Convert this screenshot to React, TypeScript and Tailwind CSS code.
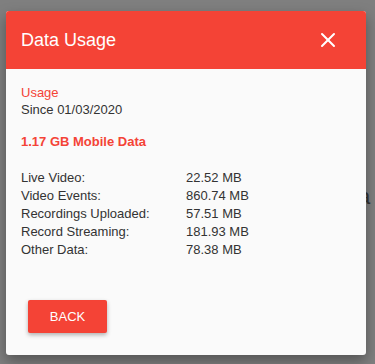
import { X } from "lucide-react";

const rows = [
  ["Live Video:", "22.52 MB"],
  ["Video Events:", "860.74 MB"],
  ["Recordings Uploaded:", "57.51 MB"],
  ["Record Streaming:", "181.93 MB"],
  ["Other Data:", "78.38 MB"],
];

export default function App() {
  return (
    <div
      className="relative h-[364px] w-[375px] overflow-hidden bg-[#7f7f7f]"
      style={{ fontFamily: '"Liberation Sans", Arial, sans-serif' }}
    >
      {/* page text showing behind the overlay */}
      <span className="absolute left-[358px] top-[186px] text-[22px] leading-none text-[#333]">a</span>

      <div className="relative ml-[6px] mt-[11px] w-[360px] overflow-hidden rounded-[3px] bg-[#fafafa] shadow-[0_6px_14px_rgba(0,0,0,0.35)]">
        {/* header */}
        <div className="flex h-[58px] items-center justify-between bg-[#f44336] pl-[15px] pr-[26px]">
          <h2 className="text-[18px] text-white">Data Usage</h2>
          <X className="h-6 w-6 text-white" strokeWidth={2} />
        </div>

        {/* body */}
        <div className="px-[15px] pt-[15px] text-[13px] leading-[17px]">
          <p className="text-[#f44336]">Usage</p>
          <p className="text-[#333]">Since 01/03/2020</p>
          <p className="mt-[15px] font-bold text-[#f44336]">1.17 GB Mobile Data</p>

          <div className="mt-[19px] grid grid-cols-[165px_1fr] leading-[18px] text-[#333]">
            {rows.map(([label, value]) => (
              <div key={label} className="contents">
                <span>{label}</span>
                <span>{value}</span>
              </div>
            ))}
          </div>
        </div>

        {/* actions */}
        <div className="px-[22px] pb-[22px] pt-[41px]">
          <button className="h-[33px] w-[79px] rounded-[2px] bg-[#f44336] text-[13px] font-medium text-white shadow-[0_2px_4px_rgba(0,0,0,0.3)]">
            BACK
          </button>
        </div>
      </div>
    </div>
  );
}
